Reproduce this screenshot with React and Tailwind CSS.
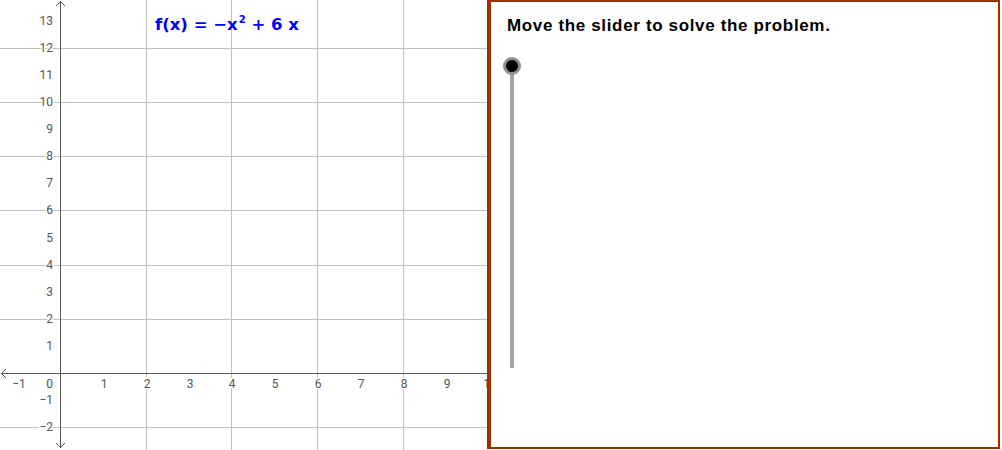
import React from 'react';

const X0 = 60;
const Y0 = 373;
const UX = 42.85;
const UY = 27.1;

const px = (v) => Math.round(X0 + v * UX);
const py = (v) => Math.round(Y0 - v * UY);

const xLabels = [-1, 1, 2, 3, 4, 5, 6, 7, 8, 9, 10];
const yLabels = [-2, -1, 1, 2, 3, 4, 5, 6, 7, 8, 9, 10, 11, 12, 13];
const xGrid = [2, 4, 6, 8, 10];
const yGrid = [-2, 2, 4, 6, 8, 10, 12];

const fmt = (n) => (n < 0 ? '\u2212' + Math.abs(n) : String(n));

const Graph = () => {
  return (
    <div className="relative w-[487px] h-[450px] shrink-0 overflow-hidden">
      <svg width="487" height="450" className="block">
        {/* grid */}
        <g stroke="#c0c0c0" strokeWidth="1" shapeRendering="crispEdges">
          {xGrid.map((v) => (
            <line key={'gx' + v} x1={px(v) + 0.5} y1="0" x2={px(v) + 0.5} y2="450" />
          ))}
          {yGrid.map((v) => (
            <line key={'gy' + v} x1="0" y1={py(v) + 0.5} x2="487" y2={py(v) + 0.5} />
          ))}
        </g>

        {/* axes */}
        <g stroke="#555" strokeWidth="1" fill="none">
          <line x1="1" y1={Y0 + 0.5} x2="487" y2={Y0 + 0.5} shapeRendering="crispEdges" />
          <line x1={X0 + 0.5} y1="1" x2={X0 + 0.5} y2="448" shapeRendering="crispEdges" />
          <polyline points={`${X0 - 4},6 ${X0 + 0.5},1.5 ${X0 + 5},6`} />
          <polyline points={`${X0 - 4},443 ${X0 + 0.5},447.5 ${X0 + 5},443`} />
          <polyline points={`6,${Y0 - 4} 1.5,${Y0 + 0.5} 6,${Y0 + 5}`} />
        </g>

        {/* labels */}
        <g
          fontFamily="Roboto, 'Liberation Sans', sans-serif"
          fontSize="12"
          fill="#555"
          stroke="#fff"
          strokeWidth="3"
          paintOrder="stroke"
        >
          {xLabels.map((v) => (
            <text key={'lx' + v} x={px(v) + (v < 0 ? 2 : 1)} y="388" textAnchor="middle">
              {fmt(v)}
            </text>
          ))}
          <text x="53" y="388" textAnchor="end">0</text>
          {yLabels.map((v) => (
            <text key={'ly' + v} x="53" y={py(v) + 4} textAnchor="end">
              {fmt(v)}
            </text>
          ))}
        </g>
      </svg>

      <div className="absolute left-[155px] top-[17px] text-[16.5px] font-bold text-[#0000ff] font-['DejaVu_Sans',sans-serif] whitespace-nowrap leading-none">
        f(x) = {'\u2212'}x<sup className="text-[10px] -top-[7px] ml-[1px]">2</sup> + 6 x
      </div>
    </div>
  );
};

const Slider = () => {
  return (
    <div className="relative ml-[12px] mt-[21px] w-[18px] h-[311px]">
      <div className="absolute left-[7px] top-[9px] bottom-0 w-[4px] bg-[#a3a3a3]" />
      <div className="absolute left-0 top-0 w-[18px] h-[18px] rounded-full bg-black border-[3px] border-[#8f8f8f]" />
    </div>
  );
};

export default function App() {
  return (
    <div className="flex w-[1002px] h-[450px] bg-white">
      <Graph />
      <div className="w-[513px] h-[449px] shrink-0 border-t-[2px] border-l-[4px] border-r-[2px] border-b-[2px] border-[#993300] bg-white">
        <div className="pl-[16px] pt-[14px] text-[17px] tracking-[0.65px] font-bold text-black font-['Liberation_Sans',sans-serif] leading-[20px] whitespace-nowrap">
          Move the slider to solve the problem.
        </div>
        <Slider />
      </div>
    </div>
  );
}
